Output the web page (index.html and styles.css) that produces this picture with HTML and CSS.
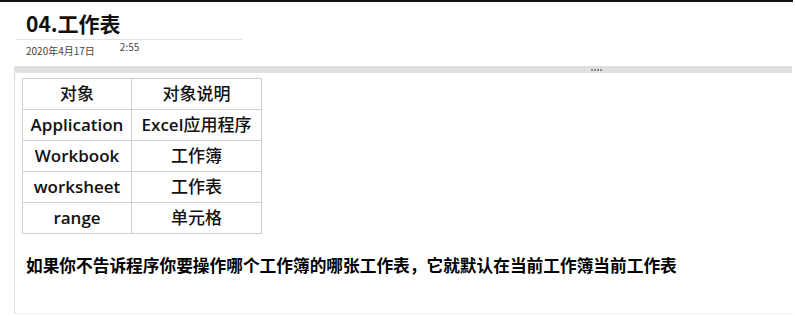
FILE: index.html
```html
<!doctype html>
<html lang="zh-CN">
<head>
	<meta charset="UTF-8" />
	<title>04.工作表</title>
	<link rel="stylesheet" href="styles.css">
</head>
<body>

<div class="page">
	<div class="note-head">
		<h1 class="note-title">04.工作表</h1>
		<div class="note-meta">
			<span class="note-date">2020年4月17日</span>
			<span class="note-time">2:55</span>
		</div>
	</div>

	<div class="splitter">
		<span class="grip"><i></i><i></i><i></i><i></i></span>
	</div>

	<div class="note-body">
		<table class="obj-table">
			<tr><td class="c1">对象</td><td class="c2">对象说明</td></tr>
			<tr><td class="c1 en">Application</td><td class="c2"><span class="en">Excel</span>应用程序</td></tr>
			<tr><td class="c1 en">Workbook</td><td class="c2">工作簿</td></tr>
			<tr><td class="c1 en">worksheet</td><td class="c2">工作表</td></tr>
			<tr><td class="c1 en">range</td><td class="c2">单元格</td></tr>
		</table>

		<p class="note-text">如果你不告诉程序你要操作哪个工作簿的哪张工作表，它就默认在当前工作簿当前工作表</p>
	</div>
</div>

</body>
</html>
```

FILE: styles.css
```css
body{
	margin: 0;
	padding: 0;
	font-family: "Open Sans", "Noto Sans CJK SC", sans-serif;
	color: #111;
	background: #fff;
}
.page{
	width: 793px;
	border-top: 2px solid #111;
}

/* title + date */
.note-head{
	padding-left: 16px;
}
.note-title{
	margin: 0;
	width: 216px;
	padding: 5px 0 0 10px;
	height: 32px;
	line-height: 32px;
	font-size: 21px;
	font-weight: bold;
	font-family: "Noto Sans CJK SC", sans-serif;
	border-bottom: 1px solid #e2e2e2;
}
.note-meta{
	display: flex;
	align-items: flex-start;
	padding-left: 10px;
	height: 26px;
	font-size: 10px;
	color: #444;
	font-family: "Noto Sans CJK SC", sans-serif;
}
.note-date{
	margin-top: 3px;
	line-height: 16px;
}
.note-time{
	margin-left: 25px;
	line-height: 14px;
}

/* grey bar above the page area */
.splitter{
	margin-left: 14px;
	width: 778px;
	height: 7px;
	background: #e0e0e0;
	display: flex;
	align-items: center;
	padding-left: 577px;
	box-sizing: border-box;
}
.grip{
	display: flex;
	gap: 1px;
}
.grip i{
	display: block;
	width: 2px;
	height: 2px;
	background: #8a8a8a;
}

.note-body{
	margin-left: 14px;
	border-left: 1px solid #dcdcdc;
	border-bottom: 1px solid #f0f0f0;
	height: 241px;
	padding: 5px 0 0 7px;
	box-sizing: border-box;
}

.obj-table{
	border-collapse: collapse;
	font-size: 17px;
	font-weight: 500;
	color: #111;
}
.obj-table td{
	border: 1px solid #cfcfcf;
	height: 30px;
	padding: 0;
	text-align: center;
	line-height: 30px;
}
.obj-table .en{ font-weight: 600; }
.obj-table .c1{ width: 108px; }
.obj-table .c2{ width: 129px; }

.note-text{
	margin: 19px 0 0 4px;
	font-size: 16.7px;
	line-height: 24px;
	font-weight: bold;
	font-family: "Noto Sans CJK SC", sans-serif;
	color: #000;
}
```
